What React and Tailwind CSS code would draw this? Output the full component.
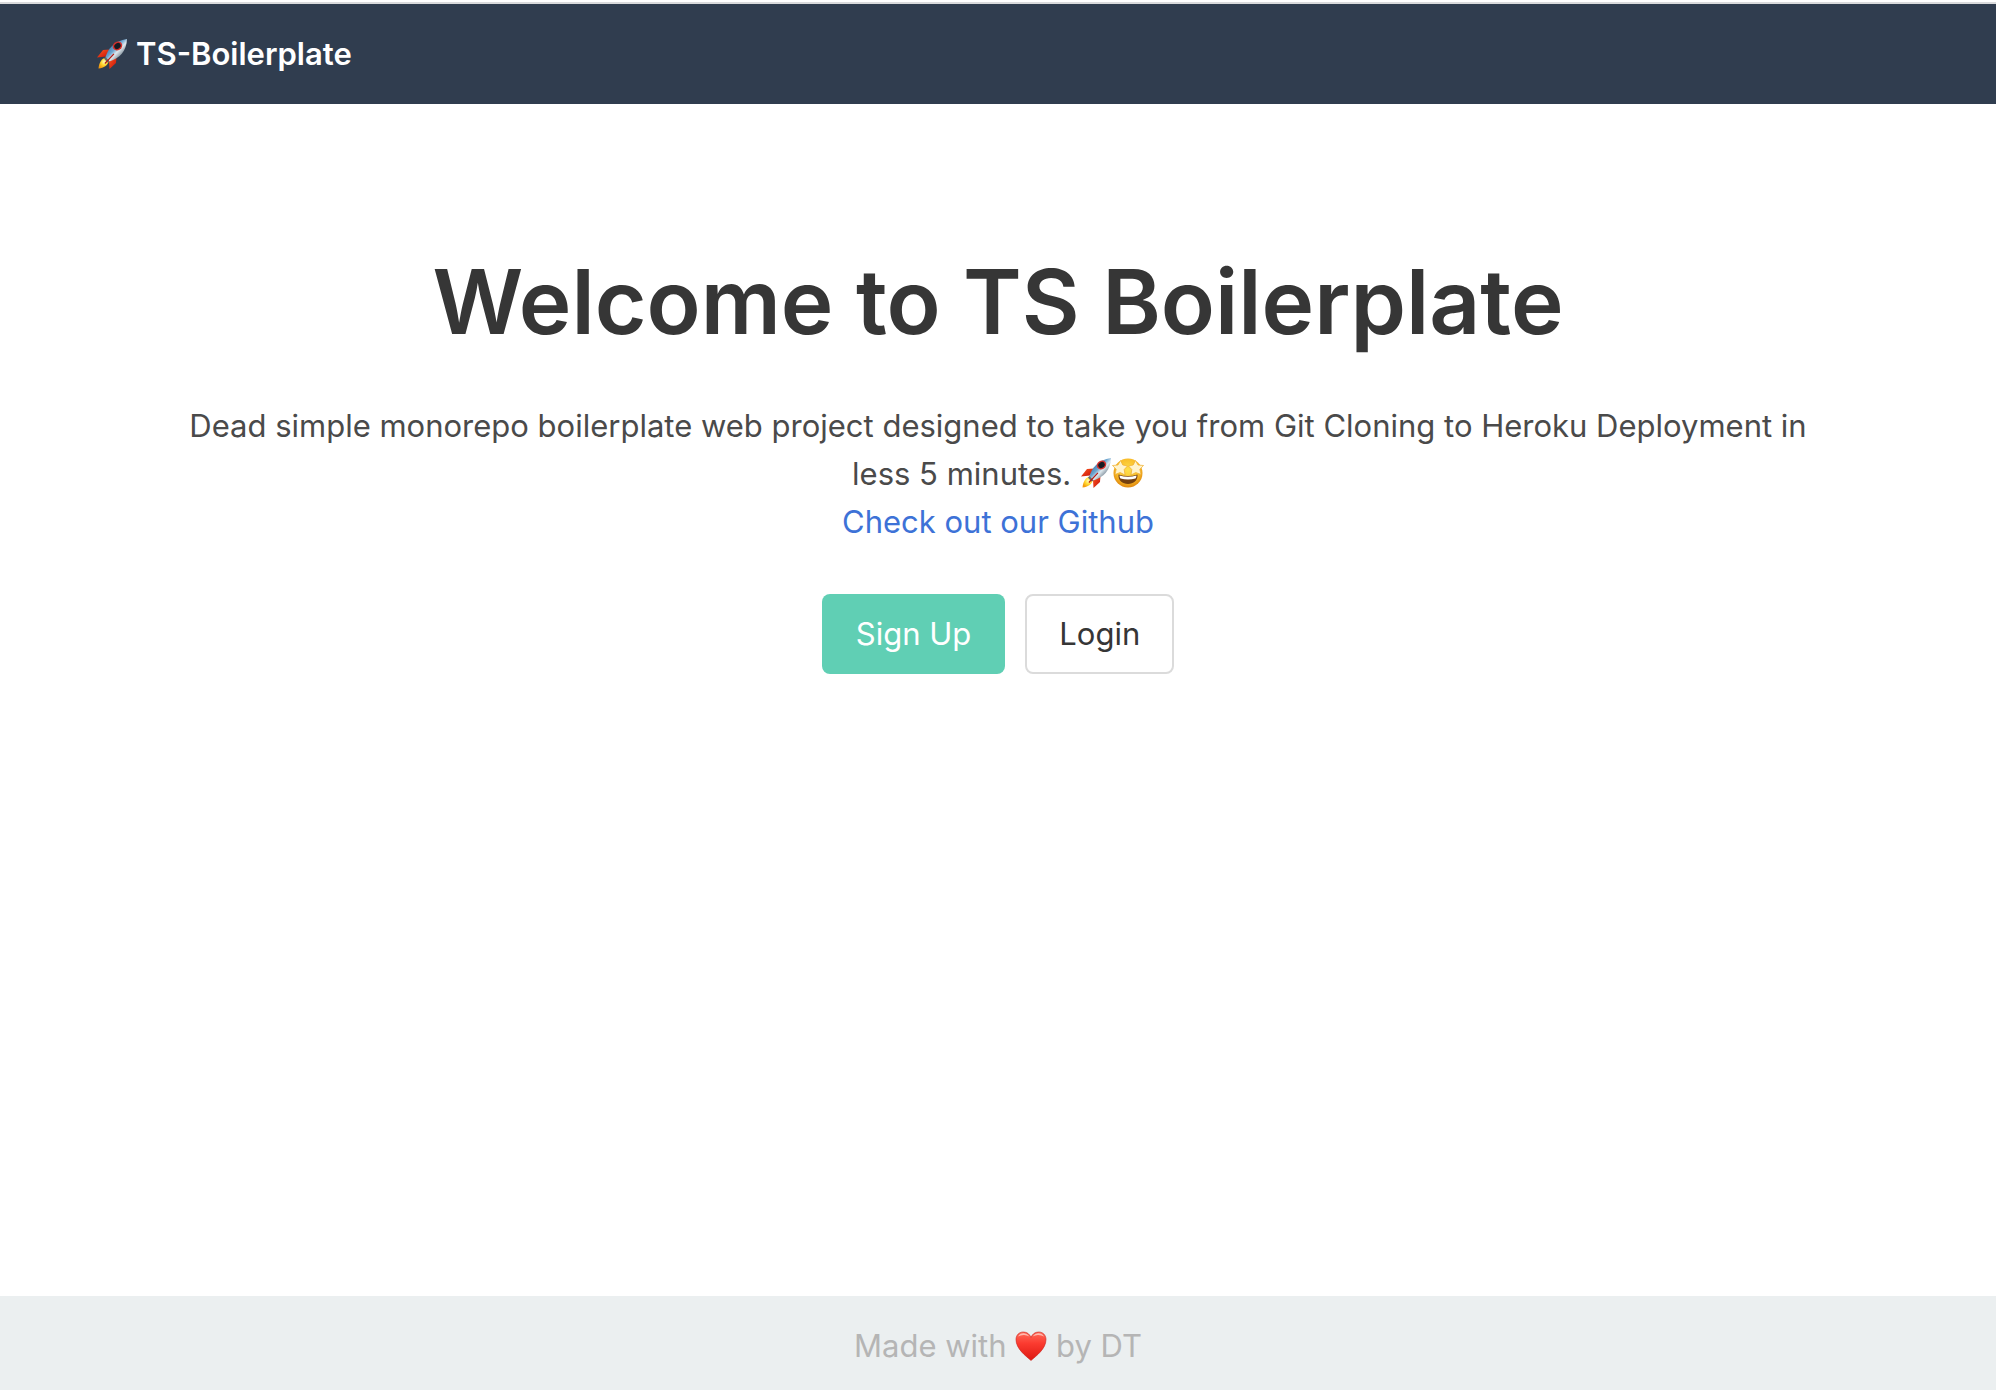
function Rocket() {
  return (
    <svg role="img" aria-label="🚀" viewBox="0 0 32 32" className="inline-block size-8 align-[-4px]">
      <defs>
        <linearGradient id="hull" x1="0.2" y1="0.2" x2="0.8" y2="0.8">
          <stop offset="0" stopColor="#2f6fa6" />
          <stop offset="0.4" stopColor="#6fa6d0" />
          <stop offset="0.6" stopColor="#dfe9ef" />
          <stop offset="1" stopColor="#5f6f7d" />
        </linearGradient>
        <linearGradient id="fin" x1="0" y1="0" x2="1" y2="1">
          <stop offset="0" stopColor="#ff5a1f" />
          <stop offset="1" stopColor="#c30d0a" />
        </linearGradient>
        <radialGradient id="flame" cx="0.55" cy="0.4" r="0.6">
          <stop offset="0" stopColor="#fffbc0" />
          <stop offset="0.5" stopColor="#ffd92e" />
          <stop offset="1" stopColor="#f39a10" />
        </radialGradient>
      </defs>
      <path d="M14 11.5 7 12 1 19.5 10 18.5Z" fill="url(#fin)" />
      <path d="M20.5 18.5 20 25 13.5 31 13 23Z" fill="url(#fin)" />
      <path d="M10 19.5C5.5 20 3 25 2.5 30.5 8 30 11.5 27.500 13 23Z" fill="url(#flame)" />
      <path d="M9.5 19C12 11 18 3 31 1 30.5 13.500 23.5 20 13.5 23.5Z" fill="url(#hull)" />
      <path d="M9.5 19 13.5 23.5 11.5 24.5 8 20.5Z" fill="#5d6874" />
      <path d="M17.5 15.5 8.500 25 9.300 26 18.300 16.300Z" fill="#b9150e" />
      <ellipse cx="21.500" cy="8" rx="5" ry="4.200" transform="rotate(-35 21.5 8)" fill="#d5302c" />
      <ellipse cx="21.500" cy="8" rx="3.400" ry="2.800" transform="rotate(-35 21.5 8)" fill="#151a24" />
    </svg>
  );
}

function StarStruck() {
  return (
    <svg role="img" aria-label="🤩" viewBox="0 0 32 32" className="inline-block size-8 align-[-4px]">
      <defs>
        <radialGradient id="face" cx="0.5" cy="0.4" r="0.6">
          <stop offset="0" stopColor="#ffe04a" />
          <stop offset="0.65" stopColor="#f9bd2b" />
          <stop offset="1" stopColor="#df870d" />
        </radialGradient>
      </defs>
      <circle cx="16" cy="16" r="14.5" fill="url(#face)" />
      <path d="M8.5 3.5 10.8 8 15.500 9 12.2 12.5 13 18 8.2 15.5 3 17.5 4.2 12.3.5 8.5 6 8Z" fill="#fff3cb" stroke="#efad2d" strokeWidth="0.7" strokeLinejoin="round" />
      <path d="M23.5 3.5 21.2 8 16.500 9 19.8 12.5 19 18 23.8 15.5 29 17.5 27.8 12.3 31.5 8.5 26 8Z" fill="#fff3cb" stroke="#efad2d" strokeWidth="0.7" strokeLinejoin="round" />
      <path d="M6.5 17.5Q16 20.5 25.5 17.5C26 23.5 21.5 27 16 27S6 23.5 6.5 17.5Z" fill="#74400f" />
      <path d="M7.5 18.5Q16 21 24.5 18.5 24.5 20.5 23.5 21.5 16 23.5 8.5 21.5 7.5 20.5 7.5 18.5Z" fill="#fff" />
    </svg>
  );
}

function Heart() {
  return (
    <svg role="img" aria-label="❤️" viewBox="0 0 32 32" className="inline-block size-8 align-[-5px]">
      <defs>
        <linearGradient id="heart" x1="0" y1="0" x2="0" y2="1">
          <stop offset="0" stopColor="#ff6a58" />
          <stop offset="0.4" stopColor="#fb3b30" />
          <stop offset="1" stopColor="#dd1812" />
        </linearGradient>
      </defs>
      <path d="M16 30.5C11 26 1 19 1 9.500 1 5 4.2 2 8.3 2 12 2 14.8 4.2 16 7.5 17.2 4.2 20 2 23.7 2 27.8 2 31 5 31 9.5 31 19 21 26 16 30.5Z" fill="url(#heart)" stroke="#c9241c" strokeWidth="0.6" />
      <path d="M3 6.5Q5 3 9 3.2 12.5 3.5 14.5 6.5 11.5 4.8 8.5 5 5.5 5 3 6.5ZM17.5 6.5Q19.5 3.5 23 3.2 27 3 29 6.5 26.5 5 23.5 5 20.5 4.8 17.5 6.5Z" fill="#ffb9ae" />
    </svg>
  );
}

export default function App() {
  return (
    <div className="flex min-h-screen flex-col bg-white font-['Inter',sans-serif] text-[31px] leading-[48px] text-[#4a4a4a]">
      <header className="mt-0.5 flex border-t-2 border-[#d9dadc] bg-[#303d4f] px-24 py-[26px] text-white">
        <a href="#" className="flex items-center gap-2 font-semibold">
          <Rocket />
          TS-Boilerplate
        </a>
      </header>
      <main className="flex flex-1 flex-col items-center px-44 pt-36 text-center">
        <h1 className="text-[89px] leading-[108px] font-semibold text-[#363636]">Welcome to TS Boilerplate</h1>
        <p className="mt-[46px]">
          Dead simple monorepo boilerplate web project designed to take you from Git Cloning to Heroku Deployment in
          less 5 minutes. <Rocket /><StarStruck />
        </p>
        <a href="#" className="text-[#3d72d7]">Check out our Github</a>
        <div className="mt-12 flex gap-5">
          <button className="h-20 rounded-lg bg-[#60cfb4] px-[34px] text-white">Sign Up</button>
          <button className="h-20 rounded-lg border-2 border-[#dbdbdb] bg-white px-8 text-[#363636]">Login</button>
        </div>
      </main>
      <footer className="bg-[#ebeff0] pt-[26px] pb-5 text-center text-[#b5b5b5]">
        Made with <Heart /> by DT
      </footer>
    </div>
  );
}
